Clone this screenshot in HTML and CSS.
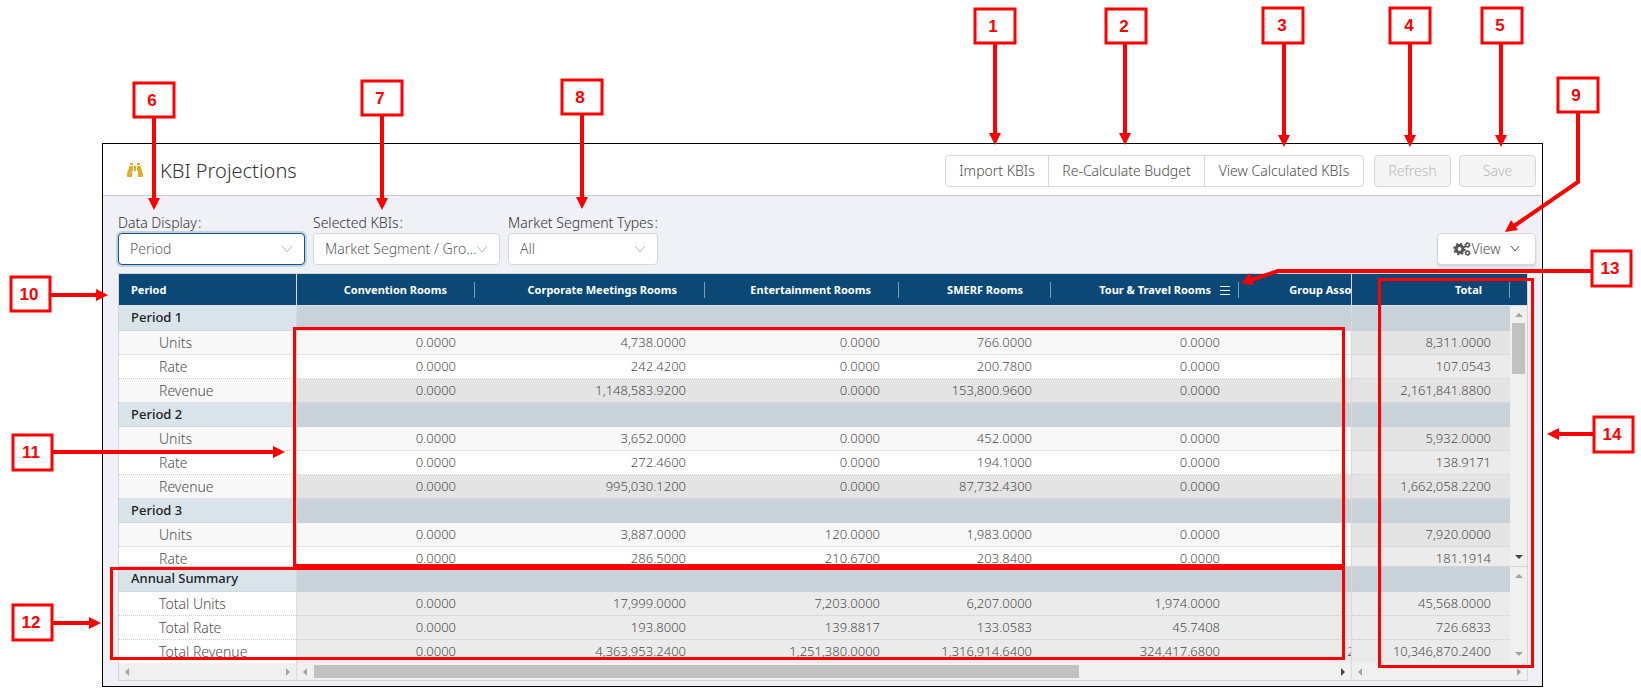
FILE: index.html
```html
<!DOCTYPE html>
<html lang="en">
<head>
<meta charset="utf-8">
<title>KBI Projections</title>
<link rel="stylesheet" href="styles.css">
</head>
<body>
<main class="window">
  <header class="titlebar">
    <svg class="title-icon" viewBox="0 0 512 512" aria-hidden="true"><path d="M416 48c0-8.84-7.16-16-16-16h-64c-8.84 0-16 7.16-16 16v48h96V48zM63.91 159.99C61.4 253.84 3.46 274.22 0 404v44c0 17.67 14.33 32 32 32h96c17.67 0 32-14.33 32-32V288h32V128H95.84c-17.63 0-31.45 14.37-31.93 31.99zm384.18 0c-.48-17.62-14.3-31.99-31.93-31.99H320v160h32v160c0 17.67 14.33 32 32 32h96c17.67 0 32-14.33 32-32v-44c-3.46-129.78-61.4-150.16-63.91-244.01zM176 32h-64c-8.84 0-16 7.16-16 16v48h96V48c0-8.84-7.16-16-16-16zm48 256h64V128h-64v160z"/></svg>
    <h1 class="title">KBI Projections</h1>
    <div class="button-group">
      <button class="btn btn-import" type="button">Import KBIs</button>
      <button class="btn btn-recalc" type="button">Re-Calculate Budget</button>
      <button class="btn btn-calculated" type="button">View Calculated KBIs</button>
    </div>
    <div class="actions">
      <button class="btn btn-action" type="button" disabled>Refresh</button>
      <button class="btn btn-action" type="button" disabled>Save</button>
    </div>
  </header>

  <section class="content">
    <div class="filters">
      <div class="field">
        <label for="display">Data Display<span class="colon">:</span></label>
        <div class="select select-active"><select id="display"><option>Period</option></select><svg class="chevron" viewBox="0 0 12 8" aria-hidden="true"><path d="M1 1l5 6 5-6"/></svg></div>
      </div>
      <div class="field">
        <label for="kbis">Selected KBIs<span class="colon">:</span></label>
        <div class="select"><select id="kbis"><option>Market Segment / Group Rooms</option></select><svg class="chevron" viewBox="0 0 12 8" aria-hidden="true"><path d="M1 1l5 6 5-6"/></svg></div>
      </div>
      <div class="field field-short">
        <label for="types">Market Segment Types<span class="colon">:</span></label>
        <div class="select"><select id="types"><option>All</option></select><svg class="chevron" viewBox="0 0 12 8" aria-hidden="true"><path d="M1 1l5 6 5-6"/></svg></div>
      </div>
      <button class="btn btn-view" type="button">
        <svg class="cogs" viewBox="0 0 18 16" aria-hidden="true">
          <circle cx="6.5" cy="8" r="3.4" class="cog-ring"/><circle cx="6.5" cy="8" r="5.3" class="cog-teeth"/>
          <circle cx="14.6" cy="4" r="1.8" class="cog-small"/><circle cx="14.6" cy="4" r="2.6" class="cog-small-teeth"/>
          <circle cx="14.6" cy="12" r="1.8" class="cog-small"/><circle cx="14.6" cy="12" r="2.6" class="cog-small-teeth"/>
        </svg>View<svg class="view-chevron" viewBox="0 0 10 8" aria-hidden="true"><path d="M1 1l4 5 4-5"/></svg>
      </button>
    </div>

    <div class="grid">
      <table class="pane pane-names">
        <thead><tr><th>Period</th></tr></thead>
        <tbody class="periods">
          <tr class="group"><th>Period 1</th></tr><tr class="units"><td>Units</td></tr><tr><td>Rate</td></tr><tr class="revenue"><td>Revenue</td></tr>
          <tr class="group"><th>Period 2</th></tr><tr class="units"><td>Units</td></tr><tr><td>Rate</td></tr><tr class="revenue"><td>Revenue</td></tr>
          <tr class="group"><th>Period 3</th></tr><tr class="units"><td>Units</td></tr><tr><td>Rate</td></tr>
        </tbody>
        <tbody class="summary">
          <tr class="group"><th>Annual Summary</th></tr><tr><td>Total Units</td></tr><tr><td>Total Rate</td></tr><tr><td>Total Revenue</td></tr>
        </tbody>
      </table>

      <table class="pane pane-values">
        <thead><tr><th>Convention Rooms</th><th>Corporate Meetings Rooms</th><th>Entertainment Rooms</th><th>SMERF Rooms</th><th class="with-menu">Tour &amp; Travel Rooms<svg class="menu" viewBox="0 0 10 9" aria-hidden="true"><path d="M0 .5h10M0 4.5h10M0 8.5h10"/></svg></th><th>Group Association Rooms</th></tr></thead>
        <tbody class="periods">
          <tr class="group"><td></td></tr>
          <tr class="units"><td>0.0000</td><td>4,738.0000</td><td>0.0000</td><td>766.0000</td><td>0.0000</td><td></td></tr>
          <tr><td>0.0000</td><td>242.4200</td><td>0.0000</td><td>200.7800</td><td>0.0000</td><td></td></tr>
          <tr class="revenue"><td>0.0000</td><td>1,148,583.9200</td><td>0.0000</td><td>153,800.9600</td><td>0.0000</td><td></td></tr>
          <tr class="group"><td></td></tr>
          <tr class="units"><td>0.0000</td><td>3,652.0000</td><td>0.0000</td><td>452.0000</td><td>0.0000</td><td></td></tr>
          <tr><td>0.0000</td><td>272.4600</td><td>0.0000</td><td>194.1000</td><td>0.0000</td><td></td></tr>
          <tr class="revenue"><td>0.0000</td><td>995,030.1200</td><td>0.0000</td><td>87,732.4300</td><td>0.0000</td><td></td></tr>
          <tr class="group"><td></td></tr>
          <tr class="units"><td>0.0000</td><td>3,887.0000</td><td>120.0000</td><td>1,983.0000</td><td>0.0000</td><td></td></tr>
          <tr><td>0.0000</td><td>286.5000</td><td>210.6700</td><td>203.8400</td><td>0.0000</td><td></td></tr>
        </tbody>
        <tbody class="summary">
          <tr class="group"><td></td></tr>
          <tr><td>0.0000</td><td>17,999.0000</td><td>7,203.0000</td><td>6,207.0000</td><td>1,974.0000</td><td></td></tr>
          <tr><td>0.0000</td><td>193.8000</td><td>139.8817</td><td>133.0583</td><td>45.7408</td><td></td></tr>
          <tr><td>0.0000</td><td>4,363,953.2400</td><td>1,251,380.0000</td><td>1,316,914.6400</td><td>324,417.6800</td><td>2,340,974.9600</td></tr>
        </tbody>
      </table>

      <table class="pane pane-total">
        <thead><tr><th>Total</th></tr></thead>
        <tbody class="periods">
          <tr class="group"><td></td></tr><tr class="units"><td>8,311.0000</td></tr><tr><td>107.0543</td></tr><tr class="revenue"><td>2,161,841.8800</td></tr>
          <tr class="group"><td></td></tr><tr class="units"><td>5,932.0000</td></tr><tr><td>138.9171</td></tr><tr class="revenue"><td>1,662,058.2200</td></tr>
          <tr class="group"><td></td></tr><tr class="units"><td>7,920.0000</td></tr><tr><td>181.1914</td></tr>
        </tbody>
        <tbody class="summary">
          <tr class="group"><td></td></tr><tr><td>45,568.0000</td></tr><tr><td>726.6833</td></tr><tr><td>10,346,870.2400</td></tr>
        </tbody>
      </table>

      <div class="vscrolls">
        <div class="vhead"></div>
        <div class="vscroll vscroll-periods"><i class="arrow up"></i><span class="vthumb"></span><i class="arrow down enabled"></i></div>
        <div class="vscroll vscroll-summary"><i class="arrow up"></i><i class="arrow down"></i></div>
      </div>

      <div class="hscroll hscroll-names"><i class="arrow left"></i><i class="arrow right"></i></div>
      <div class="hscroll hscroll-values"><i class="arrow left"></i><span class="htrack"><span class="hthumb"></span></span><i class="arrow right enabled"></i></div>
      <div class="hscroll hscroll-total"><i class="arrow left"></i><i class="arrow right"></i></div>
    </div>
  </section>
</main>

<svg class="callouts" aria-label="Callouts">
  <g class="outline">
    <rect x="294.5" y="328.5" width="1049" height="237"/>
    <rect x="111.5" y="568.5" width="1232" height="90"/>
    <rect x="1379.5" y="279.5" width="153" height="387"/>
  </g>
  <g class="leader">
    <path d="M995 44V134M1125 44V134M1284 44V136M1410 44V136M1501 44V136M154 118V199M382 116V199M582 115V198"/>
    <path d="M1578 113V182L1514 226M51 295H97M53 452H274M53 623H90M1591 271H1278L1251 280M1593 434H1558"/>
  </g>
  <g class="head">
    <path d="M989 133h12l-6 12zM1119 133h12l-6 12zM1278 135h12l-6 12zM1404 135h12l-6 12zM1495 135h12l-6 12z"/>
    <path d="M148 198h12l-6 12zM376 198h12l-6 12zM576 197h12l-6 12z"/>
    <path d="M1505 232L1511 220L1518 230zM96 289v12l12-6zM273 446v12l12-6zM89 617v12l12-6zM1241 283L1250 273L1254 285zM1559 428v12l-12-6z"/>
  </g>
  <g class="box">
    <rect x="975" y="9" width="40" height="34"/><rect x="1106" y="9" width="40" height="34"/><rect x="1263" y="8" width="40" height="35"/><rect x="1390" y="8" width="40" height="35"/><rect x="1482" y="8" width="40" height="35"/>
    <rect x="134" y="83" width="40" height="34"/><rect x="362" y="81" width="40" height="34"/><rect x="562" y="80" width="40" height="34"/><rect x="1558" y="78" width="40" height="34"/>
    <rect x="11" y="277" width="39" height="34"/><rect x="13" y="435" width="39" height="35"/><rect x="13" y="605" width="39" height="35"/><rect x="1592" y="251" width="39" height="35"/><rect x="1594" y="417" width="39" height="35"/>
  </g>
  <g class="number">
    <text x="993" y="32">1</text><text x="1124" y="32">2</text><text x="1282" y="31">3</text><text x="1409" y="31">4</text><text x="1500" y="31">5</text>
    <text x="152" y="106">6</text><text x="380" y="104">7</text><text x="580" y="103">8</text><text x="1576" y="101">9</text>
    <text x="29" y="300">10</text><text x="31" y="458">11</text><text x="31" y="628">12</text><text x="1610" y="274">13</text><text x="1612" y="440">14</text>
  </g>
</svg>
</body>
</html>
```
FILE: styles.css
```css
* { box-sizing: border-box; }

body {
  margin: 0;
  padding: 143px 98px 9px 102px;
  background: #fff;
  color: #4d4d4d;
  font: 14px/20px "Noto Sans", "Open Sans", sans-serif;
  font-weight: 300;
}

button, select { font: inherit; color: inherit; }

.window { border: 1px solid #000; background: #f0f1f6; }

.titlebar {
  display: flex;
  align-items: center;
  height: 52px;
  padding: 2px 6px 0 24px;
  background: #fff;
  border-bottom: 1px solid #c8c9cc;
}
.title-icon { width: 16px; height: 16px; margin-bottom: 2px; fill: #e2ac2a; }
.title { margin: 0 auto 0 17px; font-size: 20px; line-height: 28px; font-weight: 300; color: #333; }

.btn {
  height: 32px;
  padding: 0;
  background: #fff;
  border: 1px solid #d6d6d6;
  border-radius: 4px;
}
.btn:disabled { background: #f5f5f5; color: #b8b8b8; }
.button-group { display: flex; margin-right: 10px; }
.button-group .btn { border-radius: 0; }
.button-group .btn + .btn { margin-left: -1px; }
.button-group .btn:first-child { border-radius: 4px 0 0 4px; }
.button-group .btn:last-child { border-radius: 0 4px 4px 0; }
.btn-import { width: 104px; }
.btn-recalc { width: 157px; }
.btn-calculated { width: 160px; }
.actions { display: flex; gap: 8px; }
.btn-action { width: 77px; }

.content { padding: 17px 14px 5px 15px; }
.filters { display: flex; align-items: flex-end; gap: 8px; margin-right: -8px; margin-bottom: 8px; }
.field { width: 187px; }
.field-short { width: 150px; }
.field label { display: block; color: #333; white-space: nowrap; }
.colon { margin-left: 1px; }
.select { position: relative; }
.select select {
  display: block;
  width: 100%;
  height: 32px;
  padding: 0 18px 0 11px;
  appearance: none;
  background: #fff;
  border: 1px solid #d6d6d6;
  border-radius: 4px;
  color: #5c5c5c;
  overflow: hidden;
  text-overflow: ellipsis;
}
.select-active select { border-color: #0f5587; box-shadow: 0 0 0 2px #c3d2e0; }
.chevron { position: absolute; right: 12px; top: 12px; width: 12px; height: 8px; fill: none; stroke: #b5b5b5; pointer-events: none; }
.btn-view {
  display: flex;
  align-items: center;
  justify-content: center;
  width: 99px;
  margin-left: auto;
  box-shadow: 0 2px 2px #d5d6da;
}
.cogs { width: 18px; height: 16px; fill: none; stroke: #555; }
.cog-ring { stroke-width: 3; }
.cog-teeth { stroke-width: 2; stroke-dasharray: 2.16 2; }
.cog-small { stroke-width: 1.4; }
.cog-small-teeth { stroke-width: 1; stroke-dasharray: 1.2 1.52; }
.view-chevron { width: 10px; height: 8px; margin-left: 9px; fill: none; stroke: #555; }

.grid {
  display: grid;
  grid-template-columns: 178px minmax(0, 1fr) 158px 17px;
  border: 1px solid #d4d5d8;
  background: #f0f0f0;
}
.pane { display: block; overflow: hidden; border-right: 1px solid #d9dadc; }
.pane-total { border-right: 0; }
.pane thead, .pane tbody { display: block; overflow: hidden; }
.pane thead, .vhead { height: 32px; background: #0b4876; border-bottom: 1px solid #d9e0e6; }
.pane tr { display: grid; grid-template-columns: 1fr; }
.pane th, .pane td { padding: 0; font-weight: 300; white-space: nowrap; }
.pane-values tr { grid-template-columns: 178px 230px 194px 152px 188px 218px; }

.pane thead th {
  display: flex;
  align-items: center;
  justify-content: flex-end;
  margin: 8px 0 7px;
  height: 16px;
  padding-right: 27px;
  border-right: 1px solid #7f9db5;
  color: #fff;
  font-size: 11px;
  line-height: 16px;
  font-weight: 700;
}
.pane-names thead th { justify-content: flex-start; padding-left: 12px; border-right: 0; }
.pane thead .with-menu { gap: 9px; padding-right: 8px; }
.menu { width: 10px; height: 9px; stroke: #fff; }

.periods { height: 261px; border-bottom: 1px solid #d4d5d8; }
.summary { height: 96px; }
.pane tbody tr { height: 24px; background: #fff; border-bottom: 1px dotted #ccc; }
.pane tbody td { line-height: 23px; padding-right: 19px; text-align: right; font-size: 13px; }
.pane .units { background: #f8f8f8; }
.pane .revenue { background: #e4e4e4; }
.pane-values .summary tr, .pane-total tbody tr { background: #ebebeb; }
.pane-total .units, .pane-total .revenue { background: #e4e4e4; }
.pane tbody.periods .group, .pane tbody.summary .group { background: #c9d1d9; }
.pane tbody .group:first-child { height: 25px; }
.pane-names tbody td { padding-left: 40px; text-align: left; font-size: 14px; }
.pane-names tbody.periods .group, .pane-names tbody.summary .group { background: #d9e4ea; }
.pane-names tbody .group th { padding-left: 12px; text-align: left; font-size: 13px; line-height: 22px; font-weight: 500; color: #222; }
.pane-names .revenue { background: #f8f8f8; }

.vscrolls { display: flex; flex-direction: column; }
.vscroll { display: flex; flex-direction: column; align-items: center; padding: 7px 0; }
.vscroll-periods { height: 261px; border-bottom: 1px solid #d4d5d8; }
.vscroll-summary { height: 96px; }
.vthumb { width: 13px; height: 51px; margin-top: 6px; background: #c1c1c1; }
.arrow { flex: none; width: 0; height: 0; border: 4px solid transparent; color: #a3a3a3; }
.enabled { color: #444; }
.up { border-top: 0; border-bottom-color: currentColor; }
.down { margin-top: auto; border-bottom: 0; border-top-color: currentColor; }
.left { border-left: 0; border-right-color: currentColor; }
.right { margin-left: auto; border-right: 0; border-left-color: currentColor; }

.hscroll { display: flex; align-items: center; height: 17px; padding: 0 6px; border-right: 1px solid #d9dadc; }
.hscroll-total { grid-column: span 2; border-right: 0; }
.htrack { flex: 1; margin: 0 7px; }
.hthumb { display: block; width: 75%; height: 13px; background: #c1c1c1; }

.callouts { position: absolute; left: 0; top: 0; width: 100%; height: 100%; pointer-events: none; }
.outline { fill: none; stroke: #f00; stroke-width: 3; }
.leader { fill: none; stroke: #f00; stroke-width: 4; }
.head { fill: #f00; }
.box { fill: #fff; stroke: #f00; stroke-width: 3; }
.number { fill: #f00; font: 700 17px "Liberation Sans", sans-serif; text-anchor: middle; }
```
